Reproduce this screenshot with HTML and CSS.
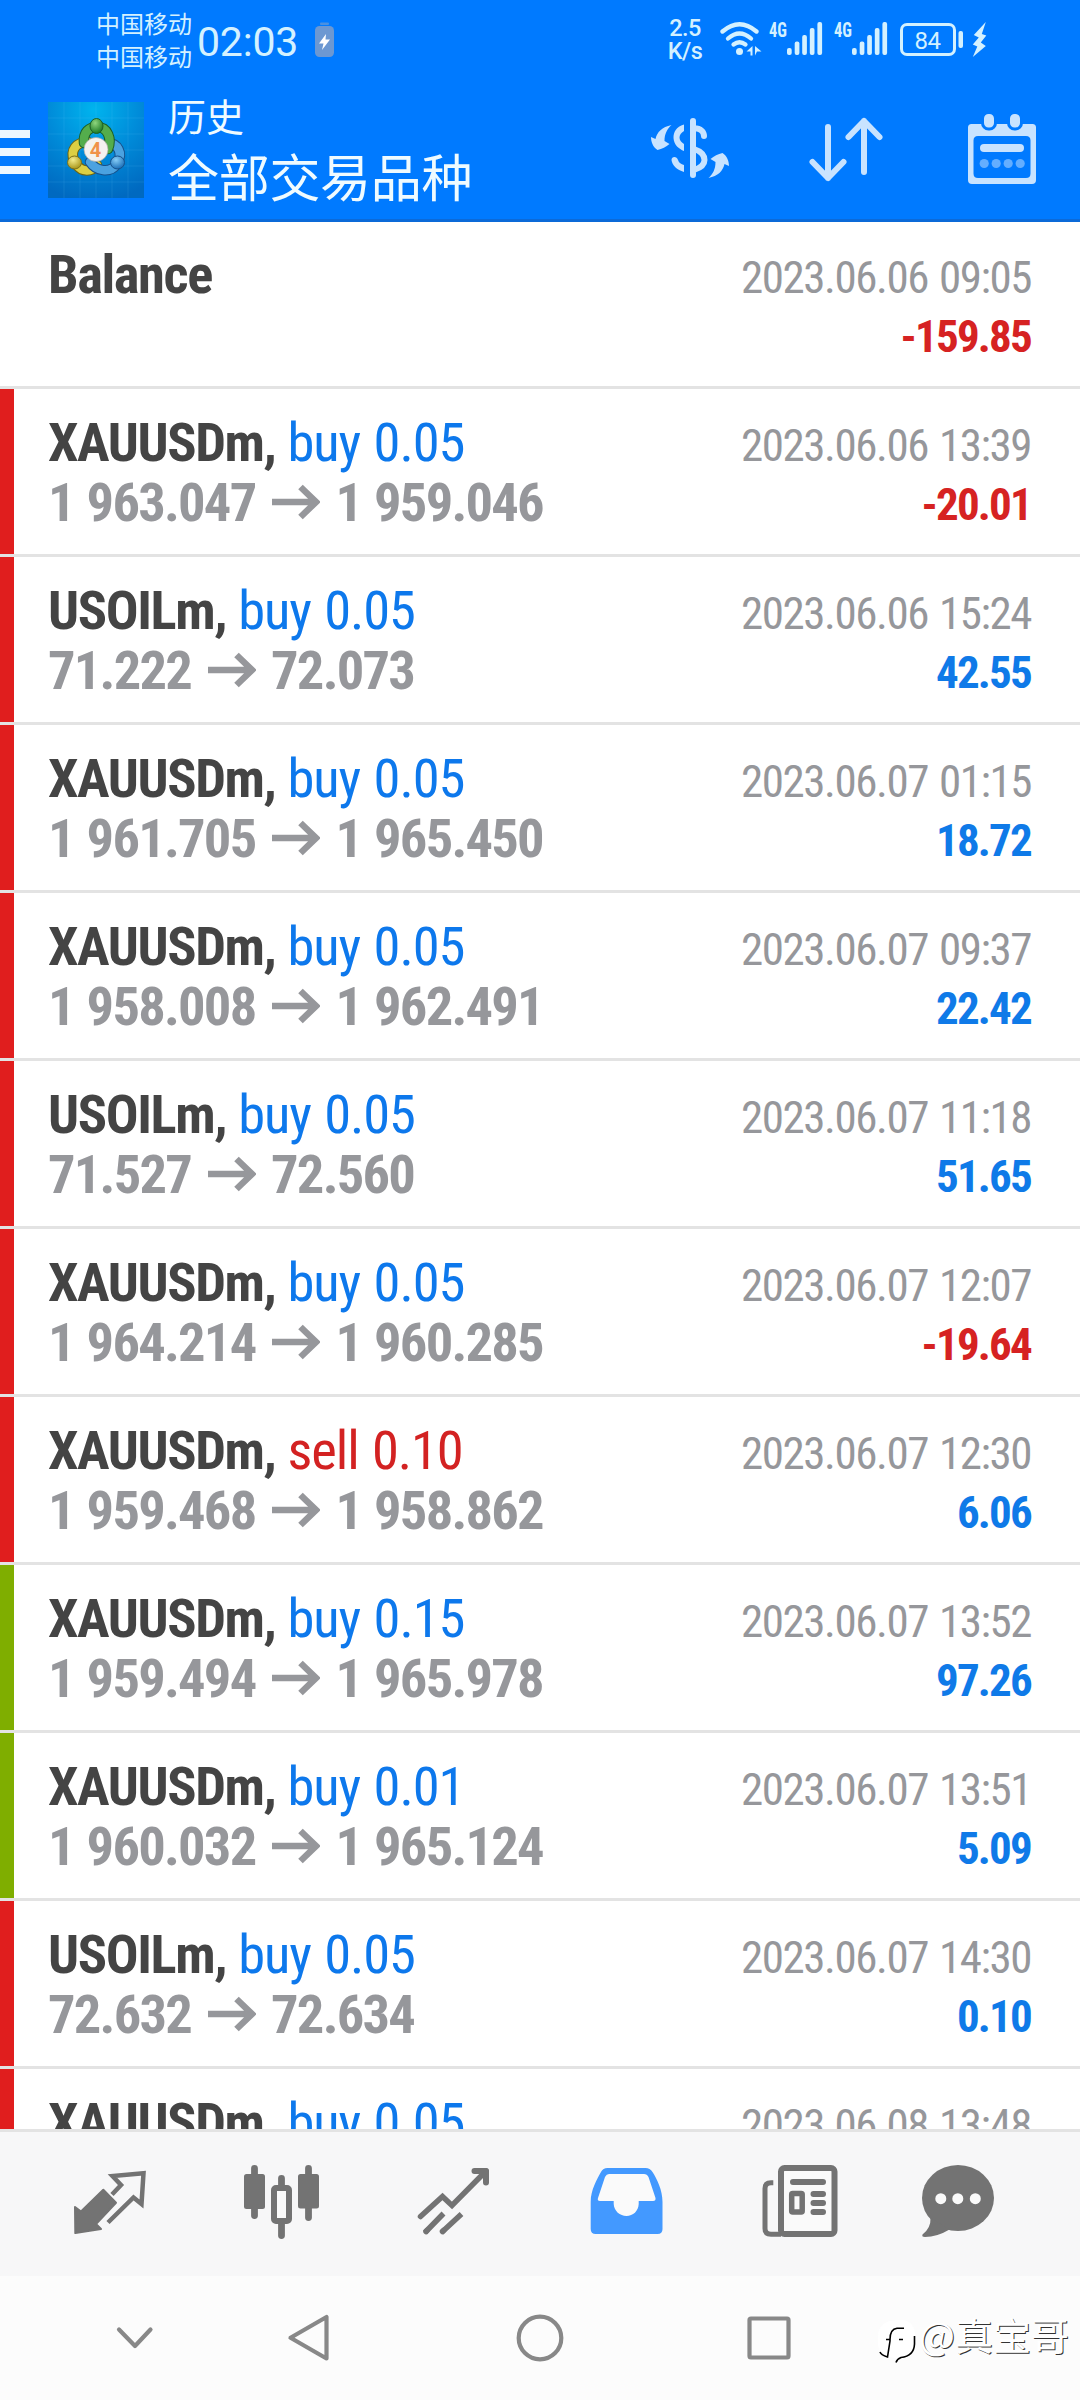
FILE: index.html
```
<!DOCTYPE html>
<html lang="zh-CN">
<head>
<meta charset="utf-8">
<title>历史</title>
<link rel="stylesheet" href="styles.css">
</head>
<body>
<div class="screen">
  <header class="header">
    <div class="status">
      <div class="carriers"><span>中国移动</span><span>中国移动</span></div>
      <div class="clock">02:03</div>
      <svg class="pill" width="22" height="40" viewBox="315 20 22 40">
        <rect x="321" y="22.500" width="9" height="2.500" rx="1" fill="#4a90e0"/>
        <rect x="316" y="26" width="19" height="31" rx="4.500" fill="#6c98d2"/>
        <path d="M327 34L320 43.500h4.500l-1.500 6.500 8-10.500h-4.500z" fill="#fff"/>
      </svg>
      <div class="speed"><span>2.5</span><span>K/s</span></div>
      <svg class="signals" width="270" height="44" viewBox="720 18 270 44">
        <g fill="none" stroke="#d4f1ff" stroke-width="4.300" stroke-linecap="round">
          <path d="M723.500 31.500Q740.500 17 757.500 31.500"/>
          <path d="M729 38.500Q740.500 28.500 752 38.500"/>
          <path d="M734.500 44.500Q740.500 40 746.500 44.500"/>
        </g>
        <g fill="#d4f1ff">
          <circle cx="740.500" cy="51.500" r="3.500"/>
          <path d="M747.500 51.500l6-5.500v9.500h-2v-4zM756 46v9.500l2-4h4.500z"/>
          <text x="770" y="37" class="net" textLength="18" lengthAdjust="spacingAndGlyphs">4G</text>
          <rect x="788" y="48" width="4.700" height="7" rx="2"/><rect x="795.700" y="41.500" width="4.700" height="13.500" rx="2"/><rect x="803.200" y="35" width="4.700" height="20" rx="2"/><rect x="810.800" y="28" width="4.700" height="27" rx="2"/><rect x="818.400" y="22" width="4.700" height="33" rx="2"/>
          <text x="835" y="37" class="net" textLength="18" lengthAdjust="spacingAndGlyphs">4G</text>
          <rect x="853" y="48" width="4.700" height="7" rx="2"/><rect x="860.700" y="41.500" width="4.700" height="13.500" rx="2"/><rect x="868.200" y="35" width="4.700" height="20" rx="2"/><rect x="875.800" y="28" width="4.700" height="27" rx="2"/><rect x="883.400" y="22" width="4.700" height="33" rx="2"/>
          <rect x="959.500" y="31" width="4.500" height="17" rx="2"/>
          <path d="M986.800 22l-12 13 5 2.500-6 7 4.500 2-4.500 10.500 13-11-5-3.500 5.500-7-4.500-1.500z"/>
          <text x="928.500" y="49" class="level" text-anchor="middle">84</text>
        </g>
        <rect x="902.500" y="24.500" width="53" height="30" rx="5.500" fill="none" stroke="#d4f1ff" stroke-width="3"/>
      </svg>
    </div>
    <div class="toolbar">
      <div class="menu"><i></i><i></i><i></i></div>
      <svg class="logo" width="96" height="96" viewBox="48 102 96 96">
        <defs>
          <radialGradient id="sky" cx=".48" cy=".08" r=".95"><stop offset="0" stop-color="#00b4ee"/><stop offset=".5" stop-color="#008bd9"/><stop offset="1" stop-color="#0069c0"/></radialGradient>
          <radialGradient id="g" cx=".4" cy=".3" r=".7"><stop offset="0" stop-color="#8fd67e"/><stop offset="1" stop-color="#1c7a24"/></radialGradient>
          <radialGradient id="y" cx=".4" cy=".3" r=".7"><stop offset="0" stop-color="#f3ec8c"/><stop offset="1" stop-color="#a8961a"/></radialGradient>
          <radialGradient id="b" cx=".4" cy=".3" r=".7"><stop offset="0" stop-color="#86ccf6"/><stop offset="1" stop-color="#1b6fb8"/></radialGradient>
        </defs>
        <rect x="48" y="102" width="96" height="96" fill="url(#sky)"/>
        <path d="M64 102v96M80 102v96M96 102v96M112 102v96M128 102v96M48 118h96M48 134h96M48 150h96M48 166h96M48 182h96" stroke="#6fd0ff" stroke-opacity=".13"/>
        <g fill="none" stroke-linecap="round">
          <path d="M74 161C70 150 76 142 88 142M76 164C82 173 92 172 97 165" stroke="#6c6413" stroke-width="10.500"/>
          <path d="M74 161C70 150 76 142 88 142M76 164C82 173 92 172 97 165" stroke="#dccf43" stroke-width="8.500"/>
          <path d="M117 163C124 153 117 143 108 143M117 164C110 174 96 171 90 162" stroke="#17508a" stroke-width="10.500"/>
          <path d="M117 163C124 153 117 143 108 143M117 164C110 174 96 171 90 162" stroke="#4ba2e0" stroke-width="8.500"/>
          <path d="M84 143C83 132 89 127 97 127C108 127 112 139 108 149" stroke="#1c5f26" stroke-width="10.500"/>
          <path d="M84 143C83 132 89 127 97 127C108 127 112 139 108 149" stroke="#54ad4c" stroke-width="8.500"/>
        </g>
        <ellipse cx="96.500" cy="126" rx="6.500" ry="7.500" fill="url(#g)" stroke="#1c5f26"/>
        <ellipse cx="74.500" cy="162.500" rx="7" ry="6.500" fill="url(#y)" stroke="#7d7118"/>
        <ellipse cx="117.500" cy="162.500" rx="7" ry="6.500" fill="url(#b)" stroke="#17508a"/>
        <circle cx="96" cy="149.500" r="12" fill="#f4f2f0" stroke="#a9a9a0" stroke-width=".7"/>
        <text x="95.500" y="157" text-anchor="middle" class="four">4</text>
      </svg>
      <div class="titles"><span class="title">历史</span><span class="subtitle">全部交易品种</span></div>
      <div class="actions">
        <svg width="100" height="100" viewBox="640 100 100 100">
          <g fill="#c8e3ff">
            <path id="swap" d="M671.500 125C662 127 657 132 655.500 139L651 137C651 142 653 147 657.500 150C662 149 666 147 669.500 144L664.500 141C664.500 134 667 129 671.500 125z"/>
            <use href="#swap" transform="rotate(180 690 151.500)"/>
            <path d="M684 124.500C676 127 673.500 132 673.500 138C674 145 679 149 684 151V144C681 142 679.500 140 679.500 137.500C679.500 135 681 133 684 131z"/>
            <path d="M671.500 160C671.500 156 677 156 678 160C679 163 681 164 684 165V172C677 170 672 165 671.500 160z"/>
          </g>
          <g fill="none" stroke="#c8e3ff" stroke-width="6" stroke-linecap="round">
            <path d="M693 121V175M694 128C701 128.500 704 132 704 136M694 149C700 151 704.500 155 704.500 160S700 168 694 170"/>
          </g>
        </svg>
        <svg width="100" height="100" viewBox="796 100 100 100" fill="none" stroke="#c8e3ff" stroke-width="6" stroke-linecap="round" stroke-linejoin="round">
          <path d="M828 127V178M812.500 162L828 178 843.500 162M864 172V121M848.500 137L864 121 879.500 137"/>
        </svg>
        <svg width="100" height="100" viewBox="952 100 100 100">
          <path fill="#c8e3ff" fill-rule="evenodd" d="M971.500 124H1032.500Q1036 124 1036 127.500V180Q1036 184 1032 184H972Q968 184 968 180V127.500Q968 124 971.500 124zM978 136Q973.500 136 973.500 140.500V173.500Q973.500 178 978 178H1026Q1030.500 178 1030.500 173.500V140.500Q1030.500 136 1026 136z"/>
          <g fill="#c8e3ff" stroke="#007aff" stroke-width="3"><rect x="982.500" y="112.500" width="13" height="16.500" rx="6"/><rect x="1008.500" y="112.500" width="13" height="16.500" rx="6"/></g>
          <rect x="980" y="144" width="44" height="8" rx="4" fill="#c8e3ff"/>
          <g fill="#64aeff"><circle cx="984.200" cy="163.500" r="4.600"/><circle cx="996.200" cy="163.500" r="4.600"/><circle cx="1008.200" cy="163.500" r="4.600"/><circle cx="1020.200" cy="163.500" r="4.600"/></g>
        </svg>
      </div>
    </div>
  </header>

  <main class="list">
    <div class="row first"><div class="deal"><div class="line"><b>Balance</b></div></div><div class="info"><span>2023.06.06 09:05</span><b class="neg">-159.85</b></div></div>
    <div class="row red"><div class="deal"><div class="line"><b>XAUUSDm,</b><span class="buy">buy 0.05</span></div><div class="line price"><span>1 963.047</span><svg class="to" viewBox="0 0 48 36"><path d="M0 18H44M28.500 3L44 18 28.500 33"/></svg><span>1 959.046</span></div></div><div class="info"><span>2023.06.06 13:39</span><b class="neg">-20.01</b></div></div>
    <div class="row red"><div class="deal"><div class="line"><b>USOILm,</b><span class="buy">buy 0.05</span></div><div class="line price"><span>71.222</span><svg class="to" viewBox="0 0 48 36"><path d="M0 18H44M28.500 3L44 18 28.500 33"/></svg><span>72.073</span></div></div><div class="info"><span>2023.06.06 15:24</span><b class="pos">42.55</b></div></div>
    <div class="row red"><div class="deal"><div class="line"><b>XAUUSDm,</b><span class="buy">buy 0.05</span></div><div class="line price"><span>1 961.705</span><svg class="to" viewBox="0 0 48 36"><path d="M0 18H44M28.500 3L44 18 28.500 33"/></svg><span>1 965.450</span></div></div><div class="info"><span>2023.06.07 01:15</span><b class="pos">18.72</b></div></div>
    <div class="row red"><div class="deal"><div class="line"><b>XAUUSDm,</b><span class="buy">buy 0.05</span></div><div class="line price"><span>1 958.008</span><svg class="to" viewBox="0 0 48 36"><path d="M0 18H44M28.500 3L44 18 28.500 33"/></svg><span>1 962.491</span></div></div><div class="info"><span>2023.06.07 09:37</span><b class="pos">22.42</b></div></div>
    <div class="row red"><div class="deal"><div class="line"><b>USOILm,</b><span class="buy">buy 0.05</span></div><div class="line price"><span>71.527</span><svg class="to" viewBox="0 0 48 36"><path d="M0 18H44M28.500 3L44 18 28.500 33"/></svg><span>72.560</span></div></div><div class="info"><span>2023.06.07 11:18</span><b class="pos">51.65</b></div></div>
    <div class="row red"><div class="deal"><div class="line"><b>XAUUSDm,</b><span class="buy">buy 0.05</span></div><div class="line price"><span>1 964.214</span><svg class="to" viewBox="0 0 48 36"><path d="M0 18H44M28.500 3L44 18 28.500 33"/></svg><span>1 960.285</span></div></div><div class="info"><span>2023.06.07 12:07</span><b class="neg">-19.64</b></div></div>
    <div class="row red"><div class="deal"><div class="line"><b>XAUUSDm,</b><span class="sell">sell 0.10</span></div><div class="line price"><span>1 959.468</span><svg class="to" viewBox="0 0 48 36"><path d="M0 18H44M28.500 3L44 18 28.500 33"/></svg><span>1 958.862</span></div></div><div class="info"><span>2023.06.07 12:30</span><b class="pos">6.06</b></div></div>
    <div class="row green"><div class="deal"><div class="line"><b>XAUUSDm,</b><span class="buy">buy 0.15</span></div><div class="line price"><span>1 959.494</span><svg class="to" viewBox="0 0 48 36"><path d="M0 18H44M28.500 3L44 18 28.500 33"/></svg><span>1 965.978</span></div></div><div class="info"><span>2023.06.07 13:52</span><b class="pos">97.26</b></div></div>
    <div class="row green"><div class="deal"><div class="line"><b>XAUUSDm,</b><span class="buy">buy 0.01</span></div><div class="line price"><span>1 960.032</span><svg class="to" viewBox="0 0 48 36"><path d="M0 18H44M28.500 3L44 18 28.500 33"/></svg><span>1 965.124</span></div></div><div class="info"><span>2023.06.07 13:51</span><b class="pos">5.09</b></div></div>
    <div class="row red"><div class="deal"><div class="line"><b>USOILm,</b><span class="buy">buy 0.05</span></div><div class="line price"><span>72.632</span><svg class="to" viewBox="0 0 48 36"><path d="M0 18H44M28.500 3L44 18 28.500 33"/></svg><span>72.634</span></div></div><div class="info"><span>2023.06.07 14:30</span><b class="pos">0.10</b></div></div>
    <div class="row red"><div class="deal"><div class="line"><b>XAUUSDm,</b><span class="buy">buy 0.05</span></div></div><div class="info"><span>2023.06.08 13:48</span></div></div>
  </main>

  <nav class="tabs">
    <svg viewBox="24 2132 172 144">
      <path fill="#737373" stroke="#737373" stroke-width="2" stroke-linejoin="round" d="M103.300 2189.700L116 2202.700 96 2224 101 2229 75.300 2233 75 2207 81 2211.500z"/>
      <path fill="none" stroke="#737373" stroke-width="4.500" d="M112 2194.500L121 2185 112.500 2176 143.500 2173.300 141.500 2204 133.500 2197.500 108 2222.500"/>
    </svg>
    <svg viewBox="196 2132 172 144">
      <g stroke="#737373" stroke-width="6.800" stroke-linecap="round"><path d="M254.500 2168.500V2215.500M308.500 2168.500V2217.500M281.500 2178.500V2188M281.500 2222V2235.500"/></g>
      <rect x="244" y="2174" width="21" height="35" rx="2.500" fill="#737373"/>
      <rect x="298" y="2174" width="21" height="34.500" rx="2.500" fill="#737373"/>
      <rect x="274" y="2188" width="15" height="33" rx="2" fill="#fafafa" stroke="#737373" stroke-width="6"/>
    </svg>
    <svg viewBox="368 2132 172 144" fill="none" stroke="#737373" stroke-width="5.500">
      <path stroke-linecap="round" d="M420.500 2216.500L442.500 2196.500 452 2205.500 486 2171"/>
      <path stroke-width="6" stroke-linecap="round" stroke-linejoin="round" d="M474.500 2171H486V2182.500"/>
      <path d="M425 2232.500L443.500 2213.500M441.500 2232.500L461.500 2214"/>
      <path stroke-linecap="round" d="M426 2231.500l1-1M442.500 2231.500l1-1"/>
    </svg>
    <svg viewBox="540 2132 172 144">
      <path fill="#4399ff" d="M590.700 2202C590.700 2190 597 2179 601 2172Q603 2168 607.500 2168H645.500Q650 2168 652.500 2172C657 2179 662.500 2190 662.500 2202V2229Q662.500 2234 657.500 2234H595.700Q590.700 2234 590.700 2229z"/>
      <path fill="#fafafa" d="M609 2174H644Q647 2174 648.500 2177L655.500 2198Q656 2201 653 2201H638.700V2204C638.500 2211 633 2216 626.500 2216S614 2211 613.700 2204V2201H600Q597 2201 598 2198L605 2177Q606.500 2174 609 2174z"/>
    </svg>
    <svg viewBox="712 2132 172 144" fill="none" stroke="#737373">
      <rect x="781" y="2168" width="53.500" height="66" rx="3.500" stroke-width="6" fill="#fafafa"/>
      <path stroke-width="5" d="M773.300 2182.700H771Q765 2182.700 765 2188.500V2228.500Q765 2234.300 771 2234.300H781"/>
      <path stroke-width="6" stroke-linecap="round" d="M793 2182H823M813.500 2194H823M813.500 2203H823M813.500 2212H823"/>
      <rect x="791.700" y="2193.500" width="10.500" height="18.500" rx="1" stroke-width="5.500"/>
    </svg>
    <svg viewBox="884 2132 172 144">
      <ellipse cx="958" cy="2198" rx="36" ry="33" fill="#737373"/>
      <path fill="#737373" d="M930.500 2218Q931 2228 922.500 2234.500Q921.500 2237 925 2237Q937 2237 949.500 2229.500z"/>
      <g fill="#fafafa"><circle cx="940.800" cy="2198.700" r="5.500"/><circle cx="957.800" cy="2198.700" r="5.500"/><circle cx="975.300" cy="2198.700" r="5.500"/></g>
    </svg>
  </nav>

  <footer class="system">
    <svg width="222" viewBox="0 2276 222 124"><path d="M119 2329.500L135 2346 150.500 2329.500"/></svg>
    <svg width="202" viewBox="222 2276 202 124"><path d="M290.500 2337.700L326.500 2317V2358.500z"/></svg>
    <svg width="231" viewBox="424 2276 231 124"><circle cx="540" cy="2338" r="21.300"/></svg>
    <svg width="228" viewBox="655 2276 228 124"><rect x="749.500" y="2318.500" width="39" height="39" rx="1.500"/></svg>
    <div class="watermark">
      <svg width="40" height="50" viewBox="876 2318 40 50">
        <path fill="#fff" d="M896 2320H902Q914 2322 914 2335V2343Q914 2355 901 2357L895 2363V2358Q877 2357 877 2343V2335Q878 2321 896 2320z"/>
        <path fill="none" stroke="#000" stroke-width="1.600" d="M885 2339.500H889Q889 2329 896 2328.200H903M889 2338.500V2341L886.500 2357Q880 2355 879 2352M898 2339.500h4M913.500 2336V2344Q913 2356 900 2357.500Q896 2359 895 2362.500"/>
      </svg>
      <span>@真宝哥</span>
    </div>
  </footer>
</div>
</body>
</html>
```
FILE: styles.css
```
* { box-sizing: border-box; }
body { margin: 0; background: #fff; font-family: "Roboto Condensed", Roboto, "Noto Sans CJK SC", sans-serif; }
svg { display: block; flex: none; }
.screen { width: 1080px; height: 2400px; display: flex; flex-direction: column; overflow: hidden; }

.header { height: 222px; flex: none; background: #007aff; border-bottom: 3px solid #0c6ad8; }
.status { height: 80px; display: flex; align-items: flex-start; padding-left: 96px; color: #d4f1ff; }
.carriers { display: flex; flex-direction: column; width: 100px; padding-top: 6px; font: 24px/33px "Noto Sans CJK SC", sans-serif; }
.clock { width: 105px; padding: 17px 0 0 1px; font: 41px/50px Roboto, sans-serif; letter-spacing: -.2px; }
.pill { margin: 20px 0 0 13px; }
.speed { display: flex; flex-direction: column; align-items: center; width: 44px; margin: 17px 0 0 327px; font: 500 23.5px/23px Roboto, sans-serif; letter-spacing: -.5px; }
.signals { margin: 18px 0 0 12px; }
.net { font: 700 20px "Roboto Condensed", sans-serif; }
.level { font: 24px Roboto, sans-serif; letter-spacing: -.5px; }

.toolbar { display: flex; align-items: flex-start; padding: 8px 28px 0 0; }
.menu { display: flex; flex-direction: column; gap: 10px; width: 48px; padding-top: 42px; }
.menu i { width: 30px; height: 8px; background: #ecf7ff; }
.logo { margin-top: 14px; }
.four { font: 700 20px Roboto, sans-serif; fill: #f0924a; }
.titles { display: flex; flex-direction: column; margin-left: 24px; color: #effbff; font-family: "Noto Sans CJK SC", sans-serif; }
.title { font-size: 38px; line-height: 53px; }
.subtitle { font-size: 51px; line-height: 68px; letter-spacing: -.3px; }
.actions { display: flex; gap: 56px; margin: 12px 0 0 auto; }

.list { height: 1907px; flex: none; overflow: hidden; background: #fff; }
.row { display: flex; justify-content: space-between; height: 168px; padding: 24px 49px 0 48px; border-bottom: 3px solid #e3e3e3; background-repeat: no-repeat; background-size: 14px 100%; }
.first { height: 167px; padding-top: 23px; }
.red { background-image: linear-gradient(#e01e1e, #e01e1e); }
.green { background-image: linear-gradient(#7fae00, #7fae00); }
.line { display: flex; height: 59px; font-size: 54.5px; line-height: 58px; white-space: pre; }
.line b { color: #444; letter-spacing: -1.4px; }
.buy, .sell { margin-left: 12px; letter-spacing: -1.1px; word-spacing: 2px; }
.buy { color: #0d78ec; }
.sell { color: #d32222; }
.price { align-items: center; font-weight: 700; color: #96979b; letter-spacing: -1.75px; word-spacing: 2px; }
.to { width: 48px; height: 36px; margin: 1px 15px 0 17px; fill: none; stroke: #96979b; stroke-width: 6.5; }
.info { display: flex; flex-direction: column; align-items: flex-end; padding-top: 3px; font-size: 45px; line-height: 59px; color: #96979b; letter-spacing: -1.45px; word-spacing: 2px; }
.info b { letter-spacing: -1.8px; }
.neg { color: #d62222; }
.pos { color: #0f7ae8; }

.tabs { height: 147px; flex: none; display: flex; padding: 0 24px; background: #f7f7f8; border-top: 3px solid #e3e3e3; }
.tabs svg { width: 172px; height: 144px; }
.system { position: relative; height: 124px; display: flex; background: #fcfcfc; }
.system > svg { height: 124px; fill: none; stroke: #888; stroke-width: 4.2; stroke-linecap: round; stroke-linejoin: round; }
.watermark { position: absolute; left: 877px; top: 42px; display: flex; color: #fff; font: 38px/50px "Noto Sans CJK SC", sans-serif; text-shadow: 1px 1px 0 #333; }
.watermark span { margin: -9px 0 0 2px; white-space: nowrap; }
```
